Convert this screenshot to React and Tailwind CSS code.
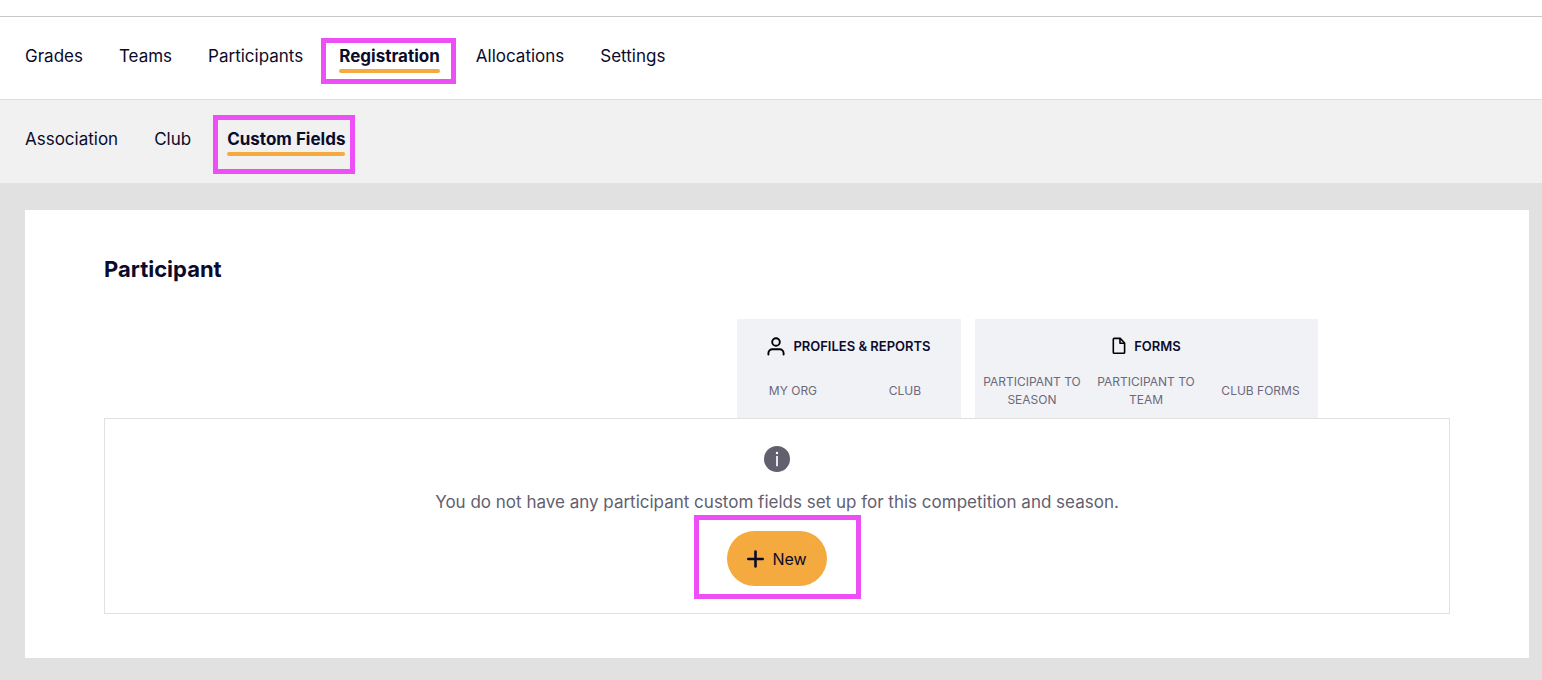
import clsx from 'clsx';

const mainTabs = [
  { label: 'Grades' },
  { label: 'Teams' },
  { label: 'Participants' },
  { label: 'Registration', active: true },
  { label: 'Allocations' },
  { label: 'Settings' },
];

const subTabs = [
  { label: 'Association' },
  { label: 'Club' },
  { label: 'Custom Fields', active: true },
];

// Pink annotation frame drawn around the parent element
const Highlight = ({ className }) => (
  <span
    aria-hidden="true"
    className={clsx('absolute border-5 border-[#ec4ff5] pointer-events-none', className)}
  />
);

const TabLink = ({ tab, highlight }) => (
  <a
    href="#"
    aria-current={tab.active ? 'page' : undefined}
    className={clsx('relative block text-[17px] leading-[26px]', tab.active && 'font-bold')}
  >
    {tab.label}
    <span className={clsx('block h-1 rounded-full', tab.active && 'bg-[#f4aa3e]')} />
    {tab.active && <Highlight className={highlight} />}
  </a>
);

const UserIcon = () => (
  <svg width="18" height="19" viewBox="0 0 18 19" fill="none" stroke="#000" strokeWidth="1.9" strokeLinecap="round">
    <circle cx="9" cy="5" r="3.8" />
    <path d="M1.4 17.6V16.2a4 4 0 0 1 4-4h7.2a4 4 0 0 1 4 4v1.4" />
  </svg>
);

const FileIcon = () => (
  <svg width="14" height="18" viewBox="0 0 14 18" fill="none" stroke="#000" strokeWidth="1.6" strokeLinejoin="round">
    <path d="M2.2 1.4h6L12.6 6v9.4a.9.9 0 0 1-.9.9H2.2a.9.9 0 0 1-.9-.9V2.3a.9.9 0 0 1 .9-.9z" />
    <path d="M8 1.6v4.6h4.4" />
  </svg>
);

const InfoIcon = () => (
  <svg width="26" height="26" viewBox="0 0 26 26">
    <circle cx="13" cy="13" r="13" fill="#62606f" />
    <circle cx="13" cy="7" r="1.2" fill="#fff" />
    <path d="M13 10v10.2" stroke="#fff" strokeWidth="1.7" />
  </svg>
);

const PlusIcon = () => (
  <svg width="17" height="18" viewBox="0 0 17 18" stroke="#0b0b2b" strokeWidth="2.6" strokeLinecap="round">
    <path d="M8.5 1.5v15M1.3 9h14.4" />
  </svg>
);

const App = () => {
  return (
    <div className="min-h-screen bg-[#e1e1e1] text-[#0b0b2b] font-['Inter',sans-serif]">
      {/* Main navigation */}
      <header className="bg-white pt-4">
        <nav aria-label="Competition" className="flex gap-9 border-t border-[#c8c8c8] px-[25px] py-[26px]">
          {mainTabs.map((tab) => (
            <TabLink key={tab.label} tab={tab} highlight="-top-[5px] -bottom-[11px] -left-[18px] -right-4" />
          ))}
        </nav>
      </header>

      {/* Registration sub navigation */}
      <nav aria-label="Registration" className="flex gap-9 border-t border-[#dedede] bg-[#f1f1f1] px-[25px] pt-[26px] pb-[27px]">
        {subTabs.map((tab) => (
          <TabLink key={tab.label} tab={tab} highlight="-top-[11px] -bottom-[18px] -left-[14px] -right-[10px]" />
        ))}
      </nav>

      <main className="pt-[27px] pr-[13px] pb-[22px] pl-[25px]">
        <section className="bg-white px-[79px] pt-[43px] pb-11">
          <h1 className="mb-[34px] text-[22px] leading-8 font-bold">Participant</h1>

          <table className="w-full table-fixed border-separate border-spacing-0 text-xs leading-[18px]">
            <colgroup>
              <col />
              <col className="w-28" />
              <col className="w-28" />
              <col className="w-[14px]" />
              <col className="w-[114px]" />
              <col className="w-[114px]" />
              <col className="w-[115px]" />
              <col className="w-[132px]" />
            </colgroup>
            <thead className="uppercase">
              <tr className="h-[54px] text-[13px]">
                <td />
                <th colSpan={2} scope="colgroup" className="bg-[#f1f2f6] font-semibold">
                  <div className="flex items-center justify-center gap-2">
                    <UserIcon />
                    Profiles &amp; Reports
                  </div>
                </th>
                <td />
                <th colSpan={3} scope="colgroup" className="bg-[#f1f2f6] font-semibold">
                  <div className="flex items-center justify-center gap-2">
                    <FileIcon />
                    Forms
                  </div>
                </th>
                <td />
              </tr>
              <tr className="text-[#6b697a]">
                <td />
                <th scope="col" className="bg-[#f1f2f6] pb-[9px] font-normal">My Org</th>
                <th scope="col" className="bg-[#f1f2f6] pb-[9px] font-normal">Club</th>
                <td />
                <th scope="col" className="bg-[#f1f2f6] px-2 pb-[9px] font-normal">Participant to Season</th>
                <th scope="col" className="bg-[#f1f2f6] px-2 pb-[9px] font-normal">Participant to Team</th>
                <th scope="col" className="bg-[#f1f2f6] px-2 pb-[9px] font-normal">Club Forms</th>
                <td />
              </tr>
            </thead>
            <tbody>
              <tr>
                <td colSpan={8} className="border border-[#e1e1e1] py-[27px]">
                  <div className="flex flex-col items-center">
                    <InfoIcon />
                    <p className="mt-[17px] mb-4 text-[17px] leading-[26px] text-[#62606f]">
                      You do not have any participant custom fields set up for this competition and season.
                    </p>
                    <div className="relative">
                      <button
                        type="button"
                        className="flex h-[55px] items-center gap-2 rounded-full bg-[#f4aa3e] px-5 text-base hover:bg-[#e89d2f]"
                      >
                        <PlusIcon />
                        New
                      </button>
                      <Highlight className="-top-4 -bottom-[13px] -left-[33px] -right-[34px]" />
                    </div>
                  </div>
                </td>
              </tr>
            </tbody>
          </table>
        </section>
      </main>
    </div>
  );
};

export default App;
